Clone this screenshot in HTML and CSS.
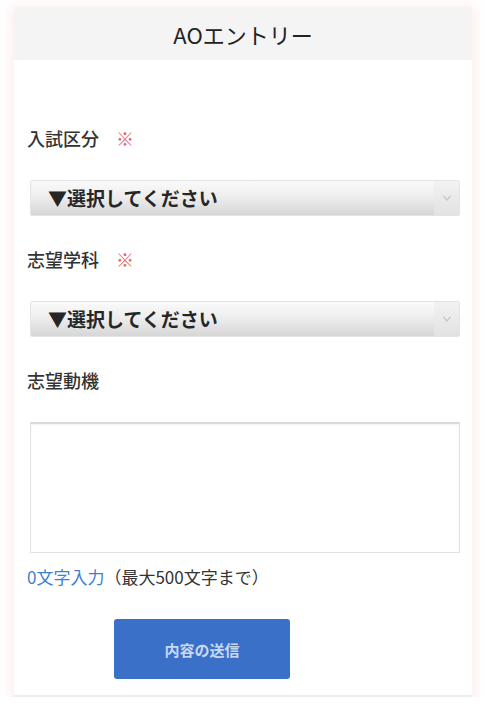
FILE: index.html
```html
<!DOCTYPE html>
<html lang="ja">
<head>
<meta charset="utf-8">
<title>AOエントリー</title>
<link rel="stylesheet" href="styles.css">
</head>
<body>
<div class="card">
  <div class="card-head">AOエントリー</div>
  <div class="card-body">
    <div class="label first">入試区分<span class="req">※</span></div>
    <div class="select">
      <span class="select-text">▼選択してください</span>
      <span class="select-arrow">
        <svg width="10" height="8" viewBox="0 0 10 8"><path d="M1.5 2 L5 6 L8.5 2" fill="none" stroke="#c8c8c8" stroke-width="1.4"/></svg>
      </span>
    </div>
    <div class="label">志望学科<span class="req">※</span></div>
    <div class="select">
      <span class="select-text">▼選択してください</span>
      <span class="select-arrow">
        <svg width="10" height="8" viewBox="0 0 10 8"><path d="M1.5 2 L5 6 L8.5 2" fill="none" stroke="#c8c8c8" stroke-width="1.4"/></svg>
      </span>
    </div>
    <div class="label">志望動機</div>
    <div class="textarea"></div>
    <div class="counter"><span class="count">0文字入力</span>（最大500文字まで）</div>
    <div class="actions">
      <div class="btn">内容の送信</div>
    </div>
  </div>
</div>
</body>
</html>
```

FILE: styles.css
```css
* { box-sizing: border-box; }
html, body { margin: 0; padding: 0; background: #ffffff; }
body {
  font-family: "Noto Sans CJK JP", "Noto Sans", sans-serif;
  color: #2a2a2a;
  padding: 7px 13px 0 14px;
}
.card {
  width: 458px;
  background: #ffffff;
  border-bottom: 2px solid #ececec;
  box-shadow: 0 2px 12px 3px rgba(255, 170, 170, 0.22);
}
.card-head {
  height: 53px;
  background: #f4f4f4;
  display: flex;
  align-items: center;
  justify-content: center;
  font-size: 22px;
  color: #222;
}
.card-body {
  padding: 66px 12px 16px 13px;
  display: flex;
  flex-direction: column;
}
.label {
  font-size: 18px;
  line-height: 24px;
  height: 24px;
  font-weight: 500;
  color: #333;
  margin-top: 31px;
}
.label.first { margin-top: 0; }
.req {
  color: #e8606a;
  margin-left: 17px;
  font-weight: 400;
}
.select {
  margin: 30px 0 0 3px;
  height: 36px;
  display: flex;
  border-radius: 2px;
  border: 1px solid #e4e4e4;
  background: linear-gradient(#fafafa 0%, #eeeeee 45%, #d6d6d6 100%);
  overflow: hidden;
}
.select-text {
  flex: 1;
  padding-left: 17px;
  font-size: 19px;
  font-weight: 700;
  color: #262626;
  line-height: 34px;
}
.select-arrow {
  width: 25px;
  display: flex;
  align-items: center;
  justify-content: center;
  background: linear-gradient(#f2f2f2, #e2e2e2);
}
.textarea {
  margin: 30px 0 0 3px;
  height: 131px;
  border: 1px solid #e2e2e2;
  border-top: 2px solid #dadada;
  box-shadow: inset 0 1px 2px rgba(0,0,0,0.05);
  background: #fff;
}
.counter {
  margin-top: 12px;
  font-size: 17px;
  line-height: 23px;
  color: #333;
}
.count { color: #3f7fd0; }
.actions {
  margin-top: 31px;
  padding-left: 87px;
}
.btn {
  width: 176px;
  height: 60px;
  border-radius: 3px;
  background: #3a70c8;
  color: #c9d8f1;
  font-size: 15px;
  font-weight: 700;
  display: flex;
  align-items: center;
  justify-content: center;
}
```
